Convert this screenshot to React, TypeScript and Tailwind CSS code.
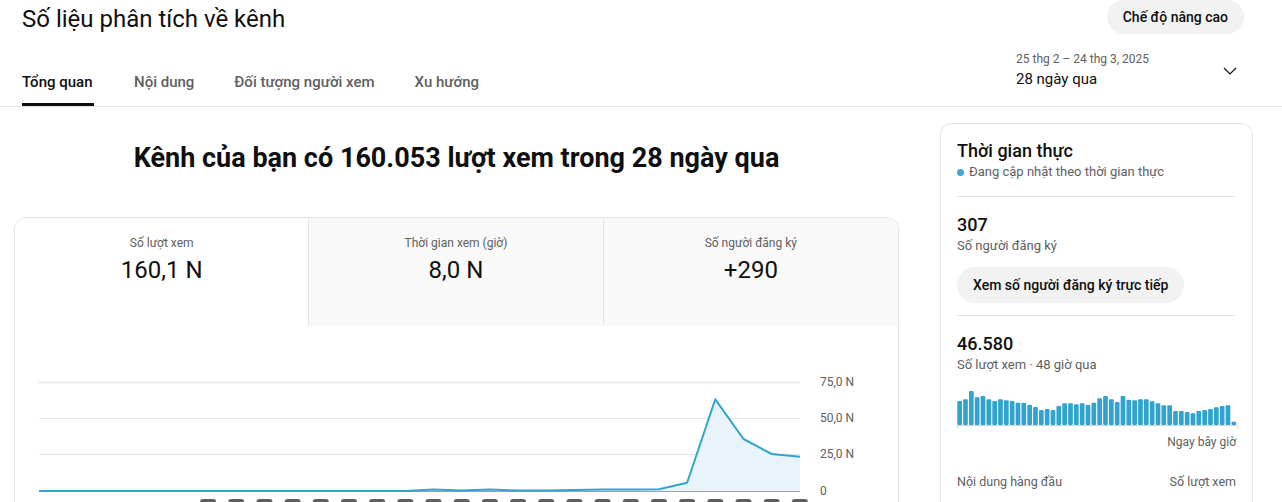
import React from "react";

const lineY = [
  491, 491, 491, 491, 491, 491, 491, 491, 491, 491, 491, 491, 491, 491,
  489.5, 490.5, 489.5, 490.5, 490.5, 490, 489.5, 489.5, 489.3, 482.7, 399.3, 439, 454, 456.7,
];

const bars = [
  24, 25.7, 34, 27.7, 29, 25.7, 24, 25.7, 24.7, 24, 22.3, 22.3, 20.3, 18, 15, 16, 15, 19, 21.7, 21.7,
  20.7, 21.7, 20, 22.3, 26.7, 29, 25.7, 23, 29, 25, 24.7, 25.7, 25.7, 23.7, 21.7, 19.7, 19.7, 14, 14,
  13, 11.7, 14, 15, 16, 17.7, 19, 19.7, 3.3,
];

const BLUE = "#30a3cf";

function LineChart() {
  const px = (i: number) => 24 + 28.18 * i;
  const py = (y: number) => y - 326;
  const pts = lineY.map((y, i) => `${px(i).toFixed(1)},${py(y).toFixed(1)}`).join(" ");
  const area = `${px(0)},165 ${pts} ${px(27).toFixed(1)},165`;
  const grid = [
    { y: 56, label: "75,0 N" },
    { y: 92, label: "50,0 N" },
    { y: 128, label: "25,0 N" },
    { y: 165, label: "0" },
  ];
  return (
    <svg width="883" height="190" className="block">
      {grid.map((g, i) => (
        <g key={i}>
          <line
            x1={24}
            x2={785}
            y1={g.y + 0.5}
            y2={g.y + 0.5}
            stroke={i === 0 ? "#ececec" : i === 3 ? "#9e9e9e" : "#e5e5e5"}
            strokeWidth={i === 0 ? 2 : 1}
          />
          <text
            x={805}
            y={g.y + 1}
            dominantBaseline="middle"
            fontSize="12"
            fill="#606060"
            fontFamily="Roboto, sans-serif"
          >
            {g.label}
          </text>
        </g>
      ))}
      <polygon points={area} fill="#e9f4fa" />
      <polyline points={pts} fill="none" stroke={BLUE} strokeWidth="2" strokeLinejoin="round" />
      {Array.from({ length: 22 }).map((_, k) => {
        const i = k + 6;
        return <rect key={i} x={px(i) - 8} y={173} width={16} height={12} rx={3} fill="#5f5f5f" />;
      })}
    </svg>
  );
}

function BarChart() {
  const pitch = 280 / 48;
  return (
    <svg width="281" height="48" className="block">
      {bars.map((h, i) => (
        <rect key={i} x={i * pitch + 0.3} y={43 - h} width={4.7} height={h} rx={1} fill={BLUE} />
      ))}
      <line x1={0} x2={281} y1={43.5} y2={43.5} stroke="#d0d0d0" strokeWidth="1" />
      <line x1={0.5} x2={0.5} y1={43} y2={47} stroke="#d9d9d9" strokeWidth="1" />
      <line x1={280.5} x2={280.5} y1={43} y2={47} stroke="#d9d9d9" strokeWidth="1" />
    </svg>
  );
}

function Metric({ label, value, active, last }: { label: string; value: string; active?: boolean; last?: boolean }) {
  return (
    <div
      className={`flex flex-col items-center pt-[17px] h-[108px] ${active ? "bg-white" : "bg-[#f9f9f9]"} ${
        last ? "" : "border-r border-[#e5e5e5]"
      }`}
    >
      <div className="text-[12px] leading-[16px] text-[#606060]">{label}</div>
      <div className="mt-[3px] text-[24px] leading-[32px] text-[#0f0f0f]">{value}</div>
    </div>
  );
}

export default function App() {
  return (
    <div className="w-[1282px] h-[502px] overflow-hidden bg-white text-[#0f0f0f] font-['Roboto',sans-serif]">
      {/* Header */}
      <div className="border-b border-[#e5e5e5]">
        <div className="flex justify-between items-start pl-[22px] pr-[38px]">
          <h1 className="mt-[5px] text-[24px] leading-[29px] font-normal">Số liệu phân tích về kênh</h1>
          <button className="h-[34px] px-[16px] rounded-full bg-[#f2f2f2] text-[14px] font-medium text-[#0f0f0f]">
            Chế độ nâng cao
          </button>
        </div>
        <div className="flex justify-between items-start pl-[22px] pr-[38px] mt-[12px] h-[60px]">
          <div className="flex items-end h-full gap-[40px]">
            {["Tổng quan", "Nội dung", "Đối tượng người xem", "Xu hướng"].map((t, i) => (
              <div
                key={t}
                className={`text-[15px] leading-[20px] font-medium pb-[11px] border-b-[3px] ${
                  i === 0 ? "w-[72px] border-[#0f0f0f] text-[#0f0f0f]" : "border-transparent text-[#606060]"
                }`}
              >
                {t}
              </div>
            ))}
          </div>
          <div className="w-[228px] flex justify-between items-center mt-[5px]">
            <div>
              <div className="text-[12px] leading-[16px] text-[#606060]">25 thg 2 – 24 thg 3, 2025</div>
              <div className="text-[15px] leading-[24px] text-[#0f0f0f]">28 ngày qua</div>
            </div>
            <svg width="14" height="8" viewBox="0 0 14 8" className="mr-[7px]">
              <polyline points="1,1 7,7 13,1" fill="none" stroke="#0f0f0f" strokeWidth="1.2" />
            </svg>
          </div>
        </div>
      </div>

      {/* Body */}
      <div className="flex pl-[14px]">
        <div className="w-[885px] pt-[35px]">
          <h2 className="text-center text-[27px] leading-[32px] font-bold text-[#0f0f0f]">
            Kênh của bạn có 160.053 lượt xem trong 28 ngày qua
          </h2>
          <div className="mt-[43px] border border-[#e5e5e5] rounded-[12px] overflow-hidden">
            <div className="grid grid-cols-3">
              <Metric label="Số lượt xem" value="160,1 N" active />
              <Metric label="Thời gian xem (giờ)" value="8,0 N" />
              <Metric label="Số người đăng ký" value="+290" last />
            </div>
            <LineChart />
          </div>
        </div>

        <div className="ml-[41px] w-[313px] mt-[16px]">
          <div className="border border-[#e5e5e5] rounded-[12px] px-[16px] pt-[15px] h-[420px]">
            <div className="text-[18px] leading-[24px] font-medium">Thời gian thực</div>
            <div className="flex items-center text-[13px] leading-[18px] text-[#606060]">
              <span className="inline-block w-[7px] h-[7px] rounded-full bg-[#3ea6d0] mr-[5px]" />
              Đang cập nhật theo thời gian thực
            </div>
            <div className="mt-[15px] border-t border-[#e5e5e5]" />
            <div className="pt-[16px] text-[18px] leading-[24px] font-medium">307</div>
            <div className="text-[13px] leading-[18px] text-[#606060]">Số người đăng ký</div>
            <button className="mt-[12px] h-[36px] px-[16px] rounded-full bg-[#f2f2f2] text-[14px] font-medium text-[#0f0f0f]">
              Xem số người đăng ký trực tiếp
            </button>
            <div className="mt-[12px] border-t border-[#e5e5e5]" />
            <div className="pt-[16px] text-[18px] leading-[24px] font-medium">46.580</div>
            <div className="text-[13px] leading-[18px] text-[#606060]">Số lượt xem · 48 giờ qua</div>
            <div className="mt-[8px]">
              <BarChart />
            </div>
            <div className="mt-[3px] text-right text-[12px] leading-[18px] text-[#606060]">Ngay bây giờ</div>
            <div className="mt-[22px] flex justify-between text-[12.5px] leading-[18px] text-[#606060]">
              <span>Nội dung hàng đầu</span>
              <span>Số lượt xem</span>
            </div>
          </div>
        </div>
      </div>
    </div>
  );
}
